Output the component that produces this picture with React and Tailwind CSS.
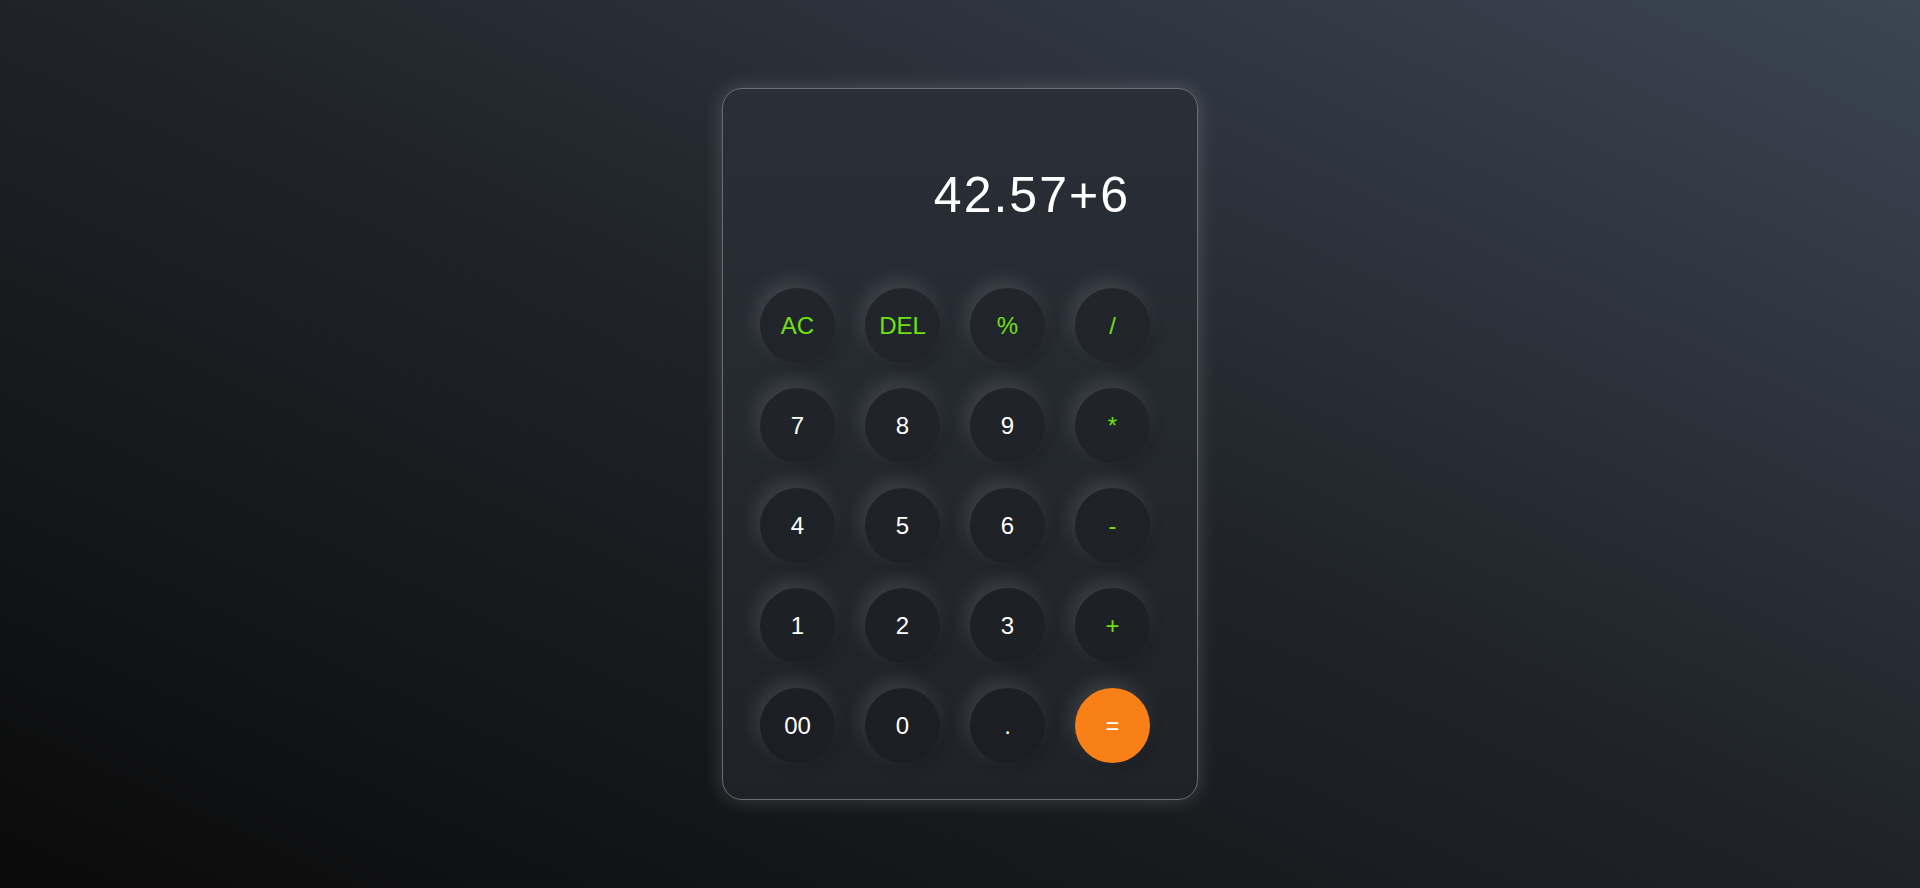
import React from "react";

const rows = [
  [
    { l: "AC", op: true },
    { l: "DEL", op: true },
    { l: "%", op: true },
    { l: "/", op: true },
  ],
  [
    { l: "7" },
    { l: "8" },
    { l: "9" },
    { l: "*", op: true },
  ],
  [
    { l: "4" },
    { l: "5" },
    { l: "6" },
    { l: "-", op: true },
  ],
  [
    { l: "1" },
    { l: "2" },
    { l: "3" },
    { l: "+", op: true },
  ],
  [
    { l: "00" },
    { l: "0" },
    { l: "." },
    { l: "=", eq: true },
  ],
];

function Key({ k }) {
  const base =
    "w-[75px] h-[75px] rounded-full flex items-center justify-center text-[24px] leading-none shadow-[-4px_-7px_20px_rgba(255,255,255,0.13),4px_5px_12px_rgba(0,0,0,0.18)]";
  if (k.eq) {
    return <button className={`${base} bg-[#f97f17] text-white`}>{k.l}</button>;
  }
  return (
    <button
      className={`${base} bg-black/[0.12] ${k.op ? "text-[#6fe012]" : "text-white"}`}
    >
      {k.l}
    </button>
  );
}

export default function App() {
  return (
    <div
      className="w-full h-[888px] flex items-center justify-center bg-[linear-gradient(to_top_right,#0a0a0a,#1f2328_50%,#3b4553)]"
      style={{ fontFamily: '"Liberation Sans", Arial, sans-serif' }}
    >
      <div className="w-[476px] h-[712px] rounded-[20px] border border-[#6a6e74] bg-[linear-gradient(to_bottom,#2a2f37,#1f2227)] shadow-[0_0_20px_rgba(255,255,255,0.18)] px-[37px] pb-[36px] flex flex-col">
        <div className="h-[199px] pt-[81px] pr-[30px] text-right text-white text-[50px] leading-[50px] tracking-[2px]">
          42.57+6
        </div>
        <div className="flex flex-col gap-[25px]">
          {rows.map((r, i) => (
            <div key={i} className="flex gap-[30px]">
              {r.map((k) => (
                <Key key={k.l} k={k} />
              ))}
            </div>
          ))}
        </div>
      </div>
    </div>
  );
}
